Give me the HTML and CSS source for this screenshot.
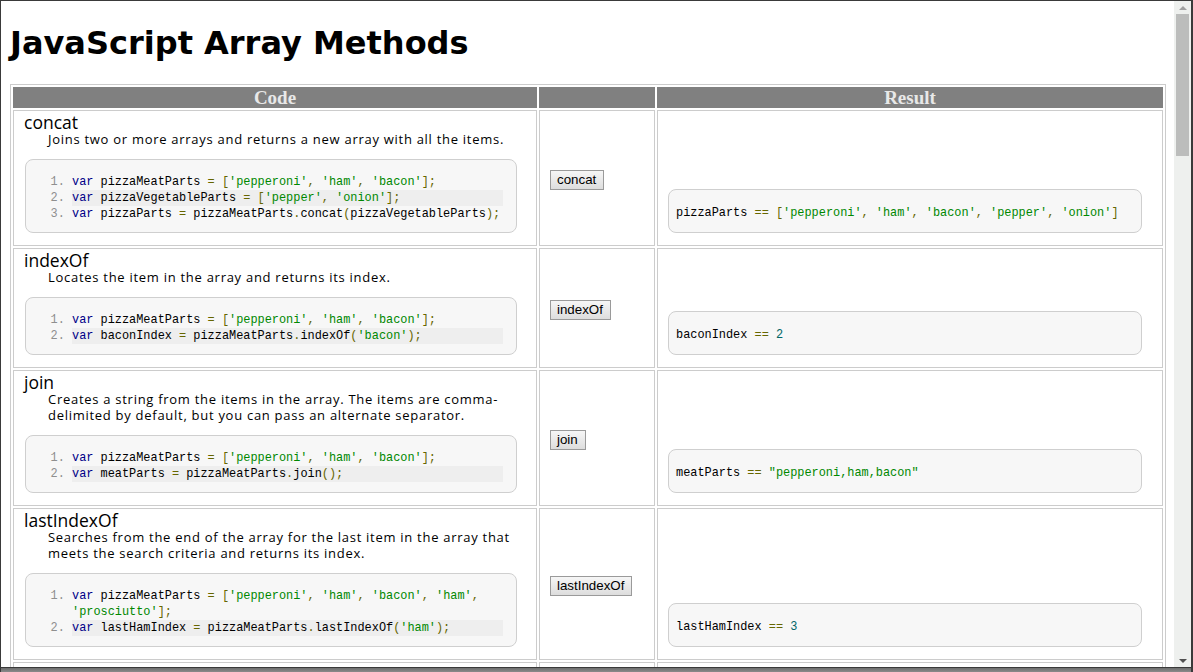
FILE: index.html
```html
<!DOCTYPE html>
<html lang="en">
<head>
<meta charset="utf-8">
<title>JavaScript Array Methods</title>
<link rel="stylesheet" href="styles.css">
</head>
<body>
<div class="window">
  <div class="viewport">
    <main class="page">
      <h1 class="page-title">JavaScript Array Methods</h1>
      <table class="methods">
        <colgroup>
          <col class="col-code">
          <col class="col-btn">
          <col class="col-result">
        </colgroup>
        <thead>
          <tr><th>Code</th><th></th><th>Result</th></tr>
        </thead>
        <tbody>
          <tr>
            <td class="code-cell">
              <div class="method-name">concat</div>
              <div class="method-desc">Joins two or more arrays and returns a new array with all the items.</div>
              <pre class="code-box"><ol class="linenums"><li><span class="kwd">var</span> pizzaMeatParts <span class="pun">=</span> <span class="pun">[</span><span class="str">'pepperoni'</span><span class="pun">,</span> <span class="str">'ham'</span><span class="pun">,</span> <span class="str">'bacon'</span><span class="pun">];</span></li><li class="alt"><span class="kwd">var</span> pizzaVegetableParts <span class="pun">=</span> <span class="pun">[</span><span class="str">'pepper'</span><span class="pun">,</span> <span class="str">'onion'</span><span class="pun">];</span></li><li><span class="kwd">var</span> pizzaParts <span class="pun">=</span> pizzaMeatParts<span class="pun">.</span>concat<span class="pun">(</span>pizzaVegetableParts<span class="pun">);</span></li></ol></pre>
            </td>
            <td class="btn-cell"><button class="run-btn" type="button">concat</button></td>
            <td class="result-cell"><pre class="result-box">pizzaParts <span class="pun">==</span> <span class="pun">[</span><span class="str">'pepperoni'</span><span class="pun">,</span> <span class="str">'ham'</span><span class="pun">,</span> <span class="str">'bacon'</span><span class="pun">,</span> <span class="str">'pepper'</span><span class="pun">,</span> <span class="str">'onion'</span><span class="pun">]</span></pre></td>
          </tr>
          <tr>
            <td class="code-cell">
              <div class="method-name">indexOf</div>
              <div class="method-desc">Locates the item in the array and returns its index.</div>
              <pre class="code-box"><ol class="linenums"><li><span class="kwd">var</span> pizzaMeatParts <span class="pun">=</span> <span class="pun">[</span><span class="str">'pepperoni'</span><span class="pun">,</span> <span class="str">'ham'</span><span class="pun">,</span> <span class="str">'bacon'</span><span class="pun">];</span></li><li class="alt"><span class="kwd">var</span> baconIndex <span class="pun">=</span> pizzaMeatParts<span class="pun">.</span>indexOf<span class="pun">(</span><span class="str">'bacon'</span><span class="pun">);</span></li></ol></pre>
            </td>
            <td class="btn-cell"><button class="run-btn" type="button">indexOf</button></td>
            <td class="result-cell"><pre class="result-box">baconIndex <span class="pun">==</span> <span class="lit">2</span></pre></td>
          </tr>
          <tr>
            <td class="code-cell">
              <div class="method-name">join</div>
              <div class="method-desc">Creates a string from the items in the array. The items are comma-delimited by default, but you can pass an alternate separator.</div>
              <pre class="code-box"><ol class="linenums"><li><span class="kwd">var</span> pizzaMeatParts <span class="pun">=</span> <span class="pun">[</span><span class="str">'pepperoni'</span><span class="pun">,</span> <span class="str">'ham'</span><span class="pun">,</span> <span class="str">'bacon'</span><span class="pun">];</span></li><li class="alt"><span class="kwd">var</span> meatParts <span class="pun">=</span> pizzaMeatParts<span class="pun">.</span>join<span class="pun">();</span></li></ol></pre>
            </td>
            <td class="btn-cell"><button class="run-btn" type="button">join</button></td>
            <td class="result-cell"><pre class="result-box">meatParts <span class="pun">==</span> <span class="str">"pepperoni,ham,bacon"</span></pre></td>
          </tr>
          <tr>
            <td class="code-cell">
              <div class="method-name">lastIndexOf</div>
              <div class="method-desc">Searches from the end of the array for the last item in the array that meets the search criteria and returns its index.</div>
              <pre class="code-box"><ol class="linenums"><li><span class="kwd">var</span> pizzaMeatParts <span class="pun">=</span> <span class="pun">[</span><span class="str">'pepperoni'</span><span class="pun">,</span> <span class="str">'ham'</span><span class="pun">,</span> <span class="str">'bacon'</span><span class="pun">,</span> <span class="str">'ham'</span><span class="pun">,</span> <span class="str">'prosciutto'</span><span class="pun">];</span></li><li class="alt"><span class="kwd">var</span> lastHamIndex <span class="pun">=</span> pizzaMeatParts<span class="pun">.</span>lastIndexOf<span class="pun">(</span><span class="str">'ham'</span><span class="pun">);</span></li></ol></pre>
            </td>
            <td class="btn-cell"><button class="run-btn" type="button">lastIndexOf</button></td>
            <td class="result-cell"><pre class="result-box">lastHamIndex <span class="pun">==</span> <span class="lit">3</span></pre></td>
          </tr>
          <tr>
            <td class="code-cell">
              <div class="method-name">pop</div>
              <div class="method-desc">Removes the last item from the array and returns it.</div>
              <pre class="code-box"><ol class="linenums"><li><span class="kwd">var</span> pizzaMeatParts <span class="pun">=</span> <span class="pun">[</span><span class="str">'pepperoni'</span><span class="pun">,</span> <span class="str">'ham'</span><span class="pun">,</span> <span class="str">'bacon'</span><span class="pun">];</span></li><li class="alt"><span class="kwd">var</span> lastMeat <span class="pun">=</span> pizzaMeatParts<span class="pun">.</span>pop<span class="pun">();</span></li></ol></pre>
            </td>
            <td class="btn-cell"><button class="run-btn" type="button">pop</button></td>
            <td class="result-cell"><pre class="result-box">lastMeat <span class="pun">==</span> <span class="str">'bacon'</span></pre></td>
          </tr>
        </tbody>
      </table>
    </main>
    <div class="scrollbar" aria-hidden="true">
      <div class="sb-arrow sb-up"></div>
      <div class="sb-thumb"></div>
      <div class="sb-track"></div>
      <div class="sb-arrow sb-down"></div>
    </div>
  </div>
  <div class="frame-bottom"></div>
</div>
</body>
</html>
```

FILE: styles.css
```css
html, body {
  margin: 0;
  padding: 0;
  overflow: hidden;
  background: #ffffff;
}

.window {
  width: 1193px;
  height: 672px;
  box-sizing: border-box;
  border-top: 1px solid #3a3a3a;
  border-left: 1px solid #3a3a3a;
  border-right: 2px solid #3a3a3a;
  display: flex;
  flex-direction: column;
  overflow: hidden;
}

.viewport {
  flex: 1;
  min-height: 0;
  display: flex;
  flex-direction: row;
}

.frame-bottom {
  height: 5px;
  flex: none;
  background: linear-gradient(#3a3a3a 0, #3a3a3a 1px, #6e6e6e 1px, #8a8a8a 100%);
}

.page {
  flex: 1;
  min-width: 0;
  overflow: hidden;
  padding: 0 8px 0 9px;
  font-family: "Open Sans", "DejaVu Sans", sans-serif;
  color: #000;
}

.page-title {
  font-family: "DejaVu Sans", Verdana, sans-serif;
  font-weight: bold;
  font-size: 32px;
  line-height: 39px;
  margin: 23px 0 21px 0;
}

.methods {
  width: 1156px;
  table-layout: fixed;
  border: 1px solid #cccccc;
  border-collapse: separate;
  border-spacing: 2px;
}

.col-code { width: 524px; }
.col-btn { width: 116px; }
.col-result { width: 506px; }

.methods th {
  background: #808080;
  color: #e8e8e8;
  font-family: "Liberation Serif", "Times New Roman", serif;
  font-weight: bold;
  font-size: 19px;
  line-height: 21px;
  height: 21px;
  padding: 0;
  text-align: center;
}

.methods td {
  border: 1px solid #cccccc;
  padding: 0;
}

.methods td.code-cell {
  vertical-align: top;
  padding: 2px 0 12px 10px;
}

.method-name {
  font-size: 17.5px;
  line-height: 18px;
}

.method-desc {
  font-size: 13px;
  line-height: 16px;
  letter-spacing: 0.72px;
  margin: 0 10px 0 24px;
}

.code-box {
  margin: 12px 19px 0 1px;
  padding: 14px 13px 10px 23px;
  border: 1px solid #cfcfcf;
  border-radius: 8px;
  background: #f7f7f7;
  font-family: "Liberation Mono", "DejaVu Sans Mono", monospace;
  font-size: 11.9px;
  line-height: 16px;
  white-space: pre-wrap;
}

.linenums {
  margin: 0;
  padding: 0 0 0 23px;
}

.linenums li {
  color: #000;
}

.linenums li::marker {
  color: #8f8f8f;
}

.linenums li.alt {
  background: #eeeeee;
}

.kwd { color: #000088; }
.str { color: #008800; }
.pun { color: #666600; }
.lit { color: #006666; }

.methods td.btn-cell {
  vertical-align: middle;
  padding: 0 0 0 10px;
}

.run-btn {
  font-family: "Liberation Sans", Arial, sans-serif;
  font-size: 13.33px;
  line-height: 16px;
  padding: 1px 7px 1px 6px;
  color: #000;
  border: 1px solid #9a9a9a;
  border-radius: 0;
  background: linear-gradient(#f6f6f6, #dddddd);
}

.methods td.result-cell {
  vertical-align: bottom;
  padding: 0 20px 12px 10px;
}

.result-box {
  margin: 0;
  padding: 15px 7px 11px 7px;
  border: 1px solid #cfcfcf;
  border-radius: 8px;
  background: #f7f7f7;
  color: #000;
  font-family: "Liberation Mono", "DejaVu Sans Mono", monospace;
  font-size: 11.9px;
  line-height: 16px;
  white-space: pre-wrap;
}

.scrollbar {
  width: 17px;
  flex: none;
  background: #eef0ee;
  display: flex;
  flex-direction: column;
  align-items: center;
}

.sb-arrow {
  height: 13px;
  width: 17px;
  flex: none;
  display: flex;
  align-items: center;
  justify-content: center;
}

.sb-up::before {
  content: "";
  border-left: 4px solid transparent;
  border-right: 4px solid transparent;
  border-bottom: 4px solid #a0a0a0;
}

.sb-down::before {
  content: "";
  border-left: 4px solid transparent;
  border-right: 4px solid transparent;
  border-top: 4px solid #505050;
}

.sb-thumb {
  width: 13px;
  height: 142px;
  flex: none;
  background: #bcbdbc;
}

.sb-track {
  flex: 1;
}
```
